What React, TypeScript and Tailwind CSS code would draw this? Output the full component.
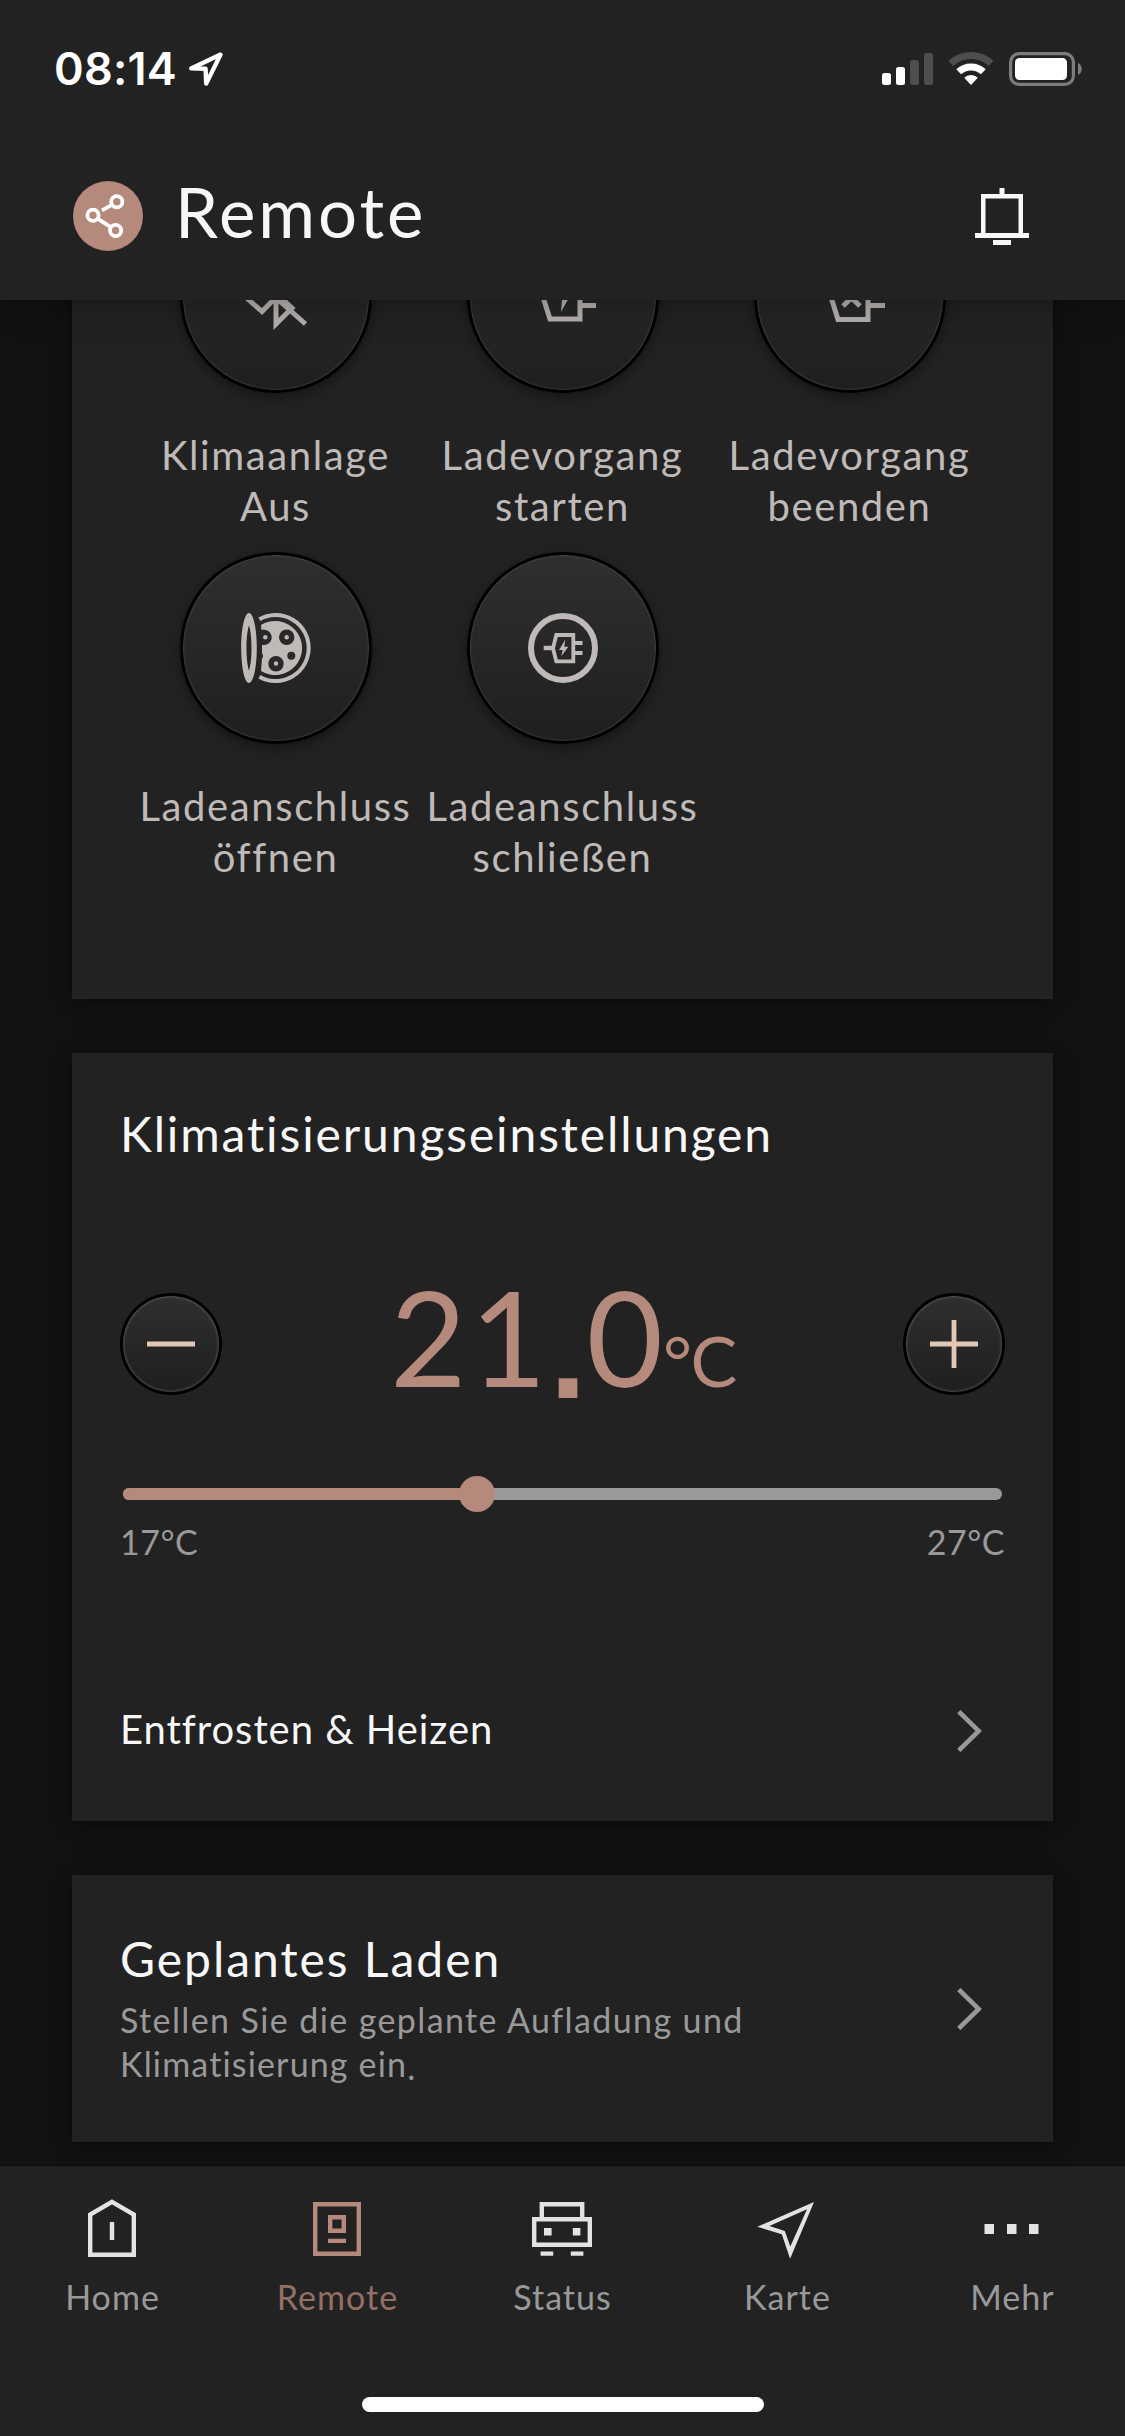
import type { ReactNode } from 'react'
import clsx from 'clsx'

function StatusBar() {
  return (
    <div className="flex h-[138px] items-center justify-between pl-[54px] pr-[43px]">
      <div className="flex items-center gap-[11px]">
        <span className="font-['Inter',sans-serif] text-[45px] leading-[54px] font-semibold tracking-[0.005em] text-white">08:14</span>
        <svg className="h-[36px] w-[36px]" viewBox="0 0 36 36" fill="none" stroke="white" strokeWidth="4.4" strokeLinejoin="round">
          <path d="M32.5 3.6 3.2 17.4 17.6 17.8 18.2 32.6Z" />
        </svg>
      </div>

      <div className="flex items-center">
        <svg className="h-[34px] w-[51px]" viewBox="0 0 51 34">
          <rect x="0" y="21" width="9" height="12" rx="2.5" fill="white" />
          <rect x="14" y="15" width="9" height="18" rx="2.5" fill="white" />
          <rect x="28" y="8" width="9" height="25" rx="2.5" fill="#4e4e4e" />
          <rect x="42" y="1" width="9" height="32" rx="2.5" fill="#4e4e4e" />
        </svg>
        <svg className="ml-[15px] h-[34px] w-[46px]" viewBox="0 0 46 34" fill="none" strokeWidth="7">
          <path d="M2.9 11.4a29.5 29.5 0 0 1 40.2 0" stroke="#4e4e4e" />
          <path d="M10.7 19.8a18 18 0 0 1 24.6 0" stroke="white" />
          <path d="M23 33 16.2 25.7a10 10 0 0 1 13.6 0Z" fill="white" stroke="none" />
        </svg>
        <svg className="ml-[15px] h-[34px] w-[73px]" viewBox="0 0 73 34">
          <rect x="1.6" y="1.6" width="62.8" height="30.8" rx="8.5" fill="none" stroke="#7d7d7d" strokeWidth="3.2" />
          <rect x="6" y="6" width="52" height="22" rx="4.5" fill="white" />
          <path d="M69 11v12c5-2 5-10 0-12Z" fill="#7d7d7d" />
        </svg>
      </div>
    </div>
  )
}

function Header() {
  return (
    <header className="relative z-10 h-[300px] shrink-0 bg-[#222222] shadow-[0_0_36px_rgba(0,0,0,0.35)]">
      <StatusBar />
      <div className="flex h-[156px] items-center pl-[73px] pr-[96px]">
        <svg className="h-[70px] w-[70px]" viewBox="0 0 70 70" fill="none" stroke="white" strokeWidth="3.8">
          <circle cx="35" cy="35" r="35" fill="#b5897b" stroke="none" />
          <circle cx="43.8" cy="20.7" r="5.6" />
          <circle cx="20" cy="34.3" r="5.6" />
          <circle cx="42.6" cy="49.5" r="5.6" />
          <path d="M29 29.3 39.2 23.6M24.6 37.6 37.8 46.2" />
        </svg>
        <h1 className="ml-[32px] pb-2 text-[69px] leading-[80px] tracking-[0.043em] text-[#f7f7f7]">Remote</h1>
        <svg className="ml-auto h-[57px] w-[54px]" viewBox="0 0 54 57" fill="#f7f7f7">
          <path d="M24.5 0h5v6h-5zM18 52h18v5H18z" />
          <path d="M6 6h42v39h6v5H0v-5h6zM10.5 10.5V45h33V10.5z" fillRule="evenodd" />
        </svg>
      </div>
    </header>
  )
}

/* The fan glyph and the plugs are drawn in a 70px box centred in the round button. */
const icons = {
  climateOff: (
    <svg className="h-[70px] w-[70px]" viewBox="0 0 70 70" fill="none" stroke="#b5b0ad" strokeWidth="5">
      <path d="M35 4v58l16-16L12 10M5 35.5 21 49.5 49 21 35 8M64.5 62 33 34" />
    </svg>
  ),
  chargeStart: (
    <svg className="h-[70px] w-[70px]" viewBox="0 0 70 70">
      <path d="M0 35h12M22 13h30v44H22l-7-22zM52 26h16M52 43.5h16" fill="none" stroke="#b5b0ad" strokeWidth="5" />
      <path d="m39 19-13 19h8l-1 12 10-18h-7z" fill="#b5b0ad" />
    </svg>
  ),
  chargeStop: (
    <svg className="h-[70px] w-[70px]" viewBox="0 0 70 70" fill="none" stroke="#b5b0ad" strokeWidth="5">
      <path d="M0 35h12M23 13h30v44.5H23L16 35zM53 26h17M53 43.5h17" />
      <path d="m28 28 17 16M45 28 28 44" />
    </svg>
  ),
  portOpen: (
    <svg className="h-[70px] w-[70px]" viewBox="0 0 70 70" fill="#bfbab7">
      <path
        d="M8 0c4.4 0 7.8 15.7 7.8 35S12.4 70 8 70 .2 54.3.2 35 3.6 0 8 0Zm0 12.5C6.5 17 5.5 25 5.5 35s1 18 2.5 22.5C9.5 53 10.5 45 10.5 35S9.5 17 8 12.5Z"
        fillRule="evenodd"
      />
      <path d="M18.4 6.3a33 33 0 1 1 0 57.4" fill="none" stroke="#bfbab7" strokeWidth="4" />
      <path d="M20 12a27 27 0 1 1 0 46l1-13V25z" />
      <g fill="#292929">
        <path d="M20 17.2a7.7 7.7 0 1 1 0 14.2zM20 39.5a4 4 0 0 1 0 7z" />
        <circle cx="45.7" cy="24.3" r="7.7" />
        <circle cx="35" cy="50.7" r="7.7" />
        <circle cx="50.3" cy="42.7" r="4" />
      </g>
      <circle cx="24.3" cy="24.3" r="2.2" />
      <circle cx="45.7" cy="24.3" r="2.2" />
      <circle cx="35" cy="50.5" r="2.2" />
    </svg>
  ),
  portClose: (
    <svg className="h-[70px] w-[70px]" viewBox="0 0 70 70" fill="none" stroke="#bfbab7">
      <circle cx="35" cy="35" r="32" strokeWidth="6" />
      <path d="M28.3 22h17v26.3h-17L25 35.2zM47 30h7.5M47 40h7.5" strokeWidth="3.8" />
      <path d="M15.7 35h8.5" strokeWidth="4.4" />
      <path d="m37.3 26.7-6.3 10.3h3.7l-1.4 6.3 7-9.6h-4z" fill="#bfbab7" stroke="none" />
    </svg>
  ),
}

function RoundButton({ className, children }: { className?: string; children: ReactNode }) {
  return (
    <button
      className={clsx(
        'flex shrink-0 items-center justify-center rounded-full border-[3px] border-black bg-gradient-to-b from-[#2f2f2f] to-[#1f1f1f]',
        className,
      )}
    >
      {children}
    </button>
  )
}

function RemoteAction({ icon, lines }: { icon: ReactNode; lines: string[] }) {
  return (
    <div className="flex flex-col items-center">
      <RoundButton className="h-[192px] w-[192px] shadow-[0_4px_12px_rgba(0,0,0,0.4),inset_0_0_2px_rgba(255,255,255,0.35)]">{icon}</RoundButton>
      <div className="mt-[37px] text-center text-[40px] leading-[51px] tracking-[0.04em] whitespace-nowrap text-[#bfbab7]">
        {lines.map((line) => (
          <div key={line}>{line}</div>
        ))}
      </div>
    </div>
  )
}

function Chevron() {
  return (
    <svg className="mr-[23px] h-[42px] w-[25px] shrink-0" viewBox="0 0 25 42" fill="none" stroke="#999999" strokeWidth="4.6">
      <path d="M1.8 1.5 21.8 21 1.8 40.5" />
    </svg>
  )
}

function ClimateCard() {
  const min = 17
  const max = 27
  const value = 21
  const percent = ((value - min) / (max - min)) * 100

  return (
    <section className="mt-[54px] h-[768px] shrink-0 bg-[#222222] px-[48px] pt-[53px] shadow-[0_3px_18px_rgba(0,0,0,0.5)]">
      <h2 className="text-[48px] leading-[56px] tracking-[0.039em] text-[#f7f7f7]">Klimatisierungseinstellungen</h2>

      <div className="mt-[131px] flex h-[102px] items-center justify-between">
        <RoundButton className="h-[102px] w-[102px] shadow-[inset_0_0_3px_rgba(255,255,255,0.4)]">
          <svg className="h-12 w-12" viewBox="0 0 48 48" stroke="#e3c9b5" strokeWidth="4.8">
            <path d="M0 24h48" />
          </svg>
        </RoundButton>
        <div className="flex items-baseline pt-[8px] pl-px text-[132px] leading-[92px] whitespace-nowrap text-[#b5897b]">
          <span className="tracking-[0.025em]">21</span>
          <span className="relative top-[11px] font-['Liberation_Sans',sans-serif] font-bold">.</span>
          <span>0</span>
          <span className="text-[70px] tracking-[-0.02em]">°C</span>
        </div>
        <RoundButton className="h-[102px] w-[102px] shadow-[inset_0_0_3px_rgba(255,255,255,0.4)]">
          <svg className="h-12 w-12" viewBox="0 0 48 48" stroke="#e3c9b5" strokeWidth="4.8">
            <path d="M0 24h48M24 0v48" />
          </svg>
        </RoundButton>
      </div>

      <div className="relative mx-[3px] mt-[93px] h-[12px] rounded-full bg-[#999999]">
        <div className="h-full rounded-full bg-[#b5897b]" style={{ width: `${percent}%` }} />
        <div className="absolute top-1/2 h-[36px] w-[36px] -translate-y-1/2 rounded-full bg-[#b5897b]" style={{ left: `calc(${percent}% - 16px)` }} />
      </div>
      <div className="mt-[22px] flex justify-between text-[34px] leading-[40px] tracking-[0.015em] text-[#999999]">
        <span>17°C</span>
        <span>27°C</span>
      </div>

      <div className="mt-[142px] flex h-[54px] items-center justify-between">
        <span className="pb-[4px] text-[40px] leading-[50px] tracking-[0.024em] text-[#f7f7f7]">Entfrosten &amp; Heizen</span>
        <Chevron />
      </div>
    </section>
  )
}

function ScheduleCard() {
  return (
    <section className="mt-[54px] flex h-[267px] shrink-0 items-center justify-between bg-[#222222] px-[48px] shadow-[0_3px_18px_rgba(0,0,0,0.5)]">
      <div>
        <h2 className="text-[48px] leading-[56px] tracking-[0.041em] text-[#f7f7f7]">Geplantes Laden</h2>
        <p className="mt-[11px] text-[34px] leading-[44px] tracking-[0.041em] whitespace-nowrap text-[#999999]">
          Stellen Sie die geplante Aufladung und
          <br />
          <span className="tracking-[0.034em]">
            Klimatisierung ein<span className="relative top-[3px]">.</span>
          </span>
        </p>
      </div>
      <Chevron />
    </section>
  )
}

const tabs = [
  {
    label: 'Home',
    icon: <path d="M30 5.8 51.8 18.6V58.8H8.2V18.6ZM30 26v18" transform="translate(0 -1)" />,
  },
  {
    label: 'Remote',
    active: true,
    icon: <path d="M8.2 7.2h43.6v49.6H8.2zM23.2 20.2h13.6v13.6H23.2zM21 43.9h18" />,
  },
  {
    label: 'Status',
    icon: (
      <>
        <path d="M2.2 22.2h55.6v25.6H2.2zM9.8 20V7.2h40.4V20M8.6 56.6h12.6M38.8 56.6h12.6" />
        <path d="M12 31h7.6v7.6H12zM40.8 31h7.6v7.6h-7.6z" fill="currentColor" stroke="none" />
      </>
    ),
  },
  {
    label: 'Karte',
    icon: (
      <path
        d="M57 5 .3 29.7 24.8 37.3 33.1 61.7ZM50 12.2 12.4 29 27.8 34 33.3 49.5Z"
        fill="currentColor"
        fillRule="evenodd"
        stroke="none"
      />
    ),
  },
  {
    label: 'Mehr',
    icon: <path d="M2.5 27h9.5v10H2.5zM25 27h9.5v10H25zM47 27h9.5v10H47z" fill="currentColor" stroke="none" />,
  },
]

function TabBar() {
  return (
    <nav className="relative z-10 flex h-[270px] shrink-0 flex-col items-center bg-[#222222] shadow-[0_-1px_0_#0b0b0b]">
      <div className="grid w-full grid-cols-5">
        {tabs.map((tab) => (
          <div key={tab.label} className="flex flex-col items-center pt-[31px]">
            <svg
              className={clsx('mr-[2px] h-[62px] w-[60px]', tab.active ? 'text-[#b5897b]' : 'text-[#e3e3e3]')}
              viewBox="0 0 60 62"
              fill="none"
              stroke="currentColor"
              strokeWidth="4.4"
            >
              {tab.icon}
            </svg>
            <span className={clsx('mt-[18px] text-[34px] leading-[40px] tracking-[0.03em]', tab.active ? 'text-[#936f64]' : 'text-[#999999]')}>
              {tab.label}
            </span>
          </div>
        ))}
      </div>
      <div className="mt-[80px] h-[15px] w-[402px] rounded-full bg-white" />
    </nav>
  )
}

export default function App() {
  return (
    <div className="flex h-[2436px] w-[1125px] flex-col overflow-hidden bg-[#121212] font-['Lato',sans-serif]">
      <Header />
      <main className="flex min-h-0 flex-1 flex-col overflow-hidden px-[72px]">
        <section className="-mt-[120px] h-[819px] shrink-0 bg-[#222222] px-[60px] pt-[21px] shadow-[0_3px_18px_rgba(0,0,0,0.5)]">
          <div className="grid grid-cols-3 gap-y-[20px]">
            <RemoteAction icon={icons.climateOff} lines={['Klimaanlage', 'Aus']} />
            <RemoteAction icon={icons.chargeStart} lines={['Ladevorgang', 'starten']} />
            <RemoteAction icon={icons.chargeStop} lines={['Ladevorgang', 'beenden']} />
            <RemoteAction icon={icons.portOpen} lines={['Ladeanschluss', 'öffnen']} />
            <RemoteAction icon={icons.portClose} lines={['Ladeanschluss', 'schließen']} />
          </div>
        </section>
        <ClimateCard />
        <ScheduleCard />
      </main>
      <TabBar />
    </div>
  )
}
